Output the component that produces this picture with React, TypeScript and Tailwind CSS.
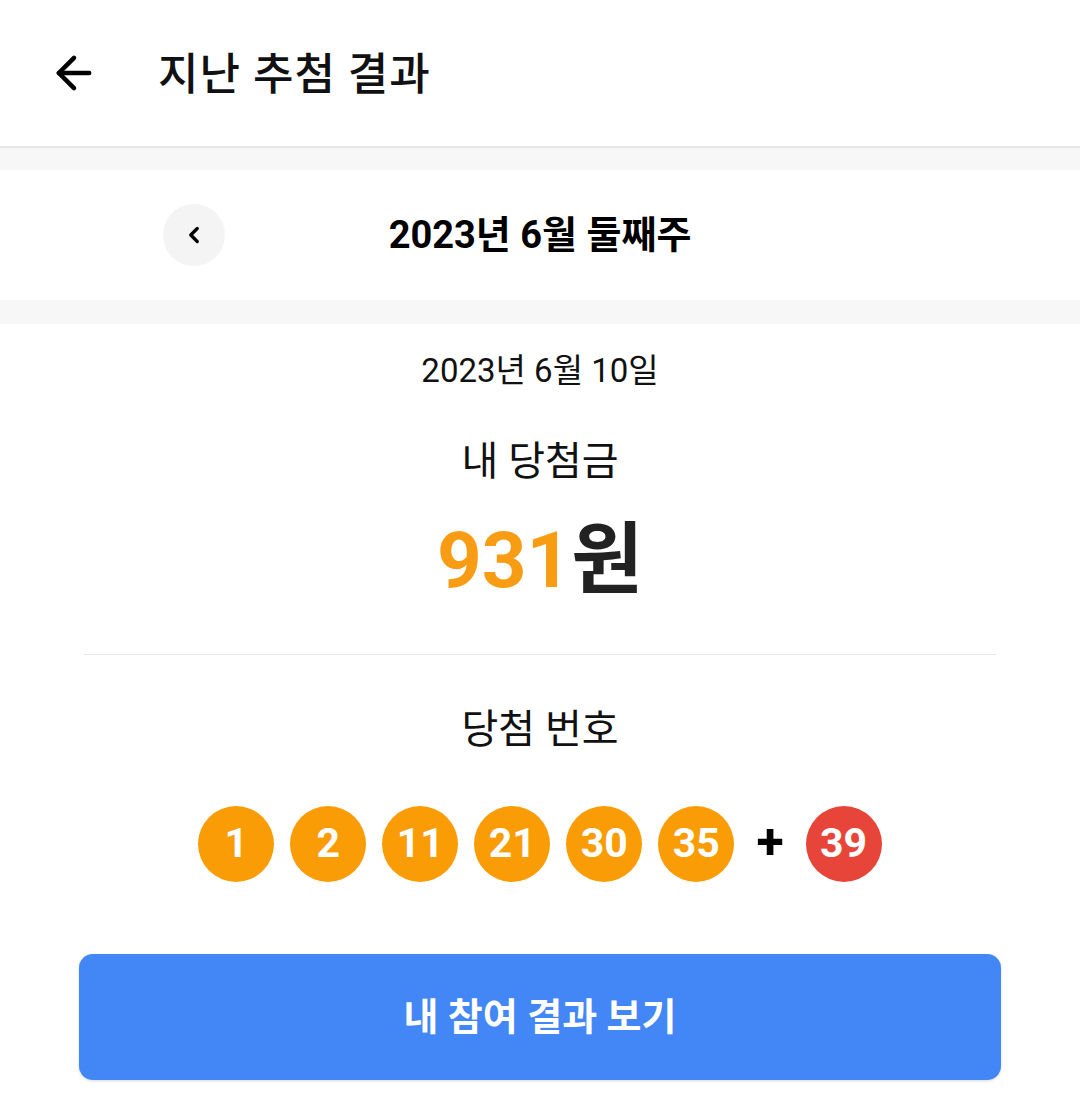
import { ArrowLeft, ChevronLeft } from 'lucide-react'

const mainNumbers = [1, 2, 11, 21, 30, 35]
const bonus = 39

function Ball({ n, red }: { n: number; red?: boolean }) {
  return (
    <div
      className={`w-[76px] h-[76px] rounded-full flex items-center justify-center text-white text-[41px] font-bold ${
        red ? 'bg-[#e8453a]' : 'bg-[#fa9c05]'
      }`}
    >
      {n}
    </div>
  )
}

export default function App() {
  return (
    <div className="w-[1080px] h-[1119px] bg-white overflow-hidden font-['Roboto','Noto_Sans_CJK_KR',sans-serif] text-[#111]">
      {/* Header */}
      <div className="h-[148px] flex items-center border-b-2 border-[#e6e6e6] bg-white">
        <button className="ml-[48px] w-[52px] h-[52px] flex items-center justify-center">
          <ArrowLeft className="w-[52px] h-[52px] text-black" strokeWidth={2.1} />
        </button>
        <h1 className="ml-[58px] text-[44px] font-medium tracking-[1px] mt-[4px]">지난 추첨 결과</h1>
      </div>

      <div className="h-[22px] bg-[#f7f7f7]" />

      {/* Week selector */}
      <div className="h-[130px] relative flex items-center justify-center bg-white">
        <button className="absolute left-[163px] top-[34px] w-[62px] h-[62px] rounded-full bg-[#f4f4f4] flex items-center justify-center">
          <ChevronLeft className="w-[26px] h-[26px] text-black" strokeWidth={3} />
        </button>
        <div className="text-[38px] font-bold text-black">2023년 6월 둘째주</div>
      </div>

      <div className="h-[24px] bg-[#f7f7f7]" />

      {/* Result */}
      <div className="flex flex-col items-center">
        <div className="mt-[25px] text-[33px] leading-[44px] text-[#111]">2023년 6월 10일</div>
        <div className="mt-[43px] text-[40px] leading-[52px] text-[#111]">내 당첨금</div>
        <div className="mt-[28px] text-[78px] leading-[90px] font-bold">
          <span className="text-[#f89c13]">931</span>
          <span className="text-[#222]">원</span>
        </div>
        <div className="mt-[48px] w-[912px] h-px bg-[#e8e8e8]" />
        <div className="mt-[49px] text-[40px] leading-[52px] text-[#111]">당첨 번호</div>
        <div className="mt-[50px] flex items-center gap-[16px]">
          {mainNumbers.map((n) => (
            <Ball key={n} n={n} />
          ))}
          <span className="mx-[6px] text-[50px] font-bold leading-none text-black mb-[4px]">+</span>
          <Ball n={bonus} red />
        </div>
        <button className="mt-[72px] w-[922px] h-[126px] rounded-[14px] bg-[#4287f5] text-white text-[38px] font-bold shadow-[0_1px_3px_rgba(0,0,0,0.15)]">
          내 참여 결과 보기
        </button>
      </div>
    </div>
  )
}
